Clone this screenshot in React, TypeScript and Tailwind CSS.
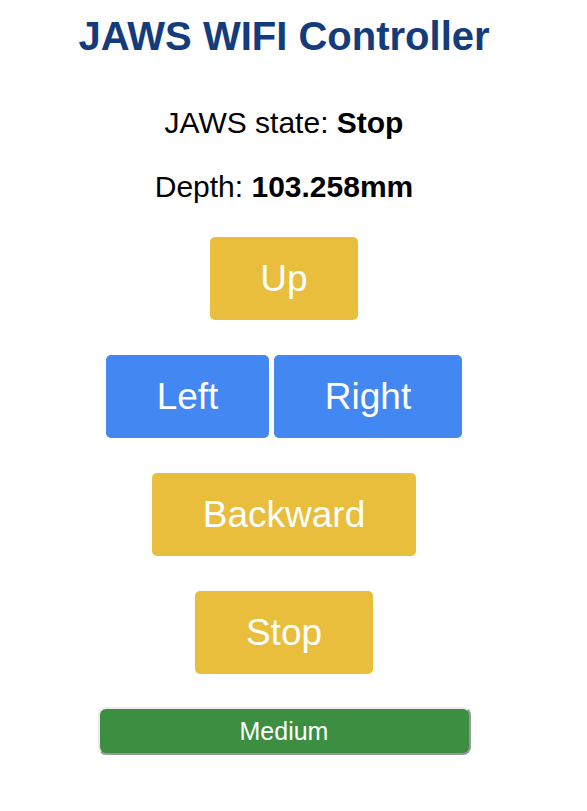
import React from 'react';

const btnBase =
  "h-[83px] rounded-[5px] text-white text-[37px] leading-none font-['Liberation_Sans',Arial,sans-serif]";

function App() {
  return (
    <div className="min-h-screen bg-white font-['Liberation_Sans',Arial,sans-serif]">
      <div className="w-[568px] flex flex-col items-center text-center">
        {/* Title */}
        <h1 className="pt-[13px] text-[40px] leading-[46px] font-bold text-[#143b7c]">
          JAWS WIFI Controller
        </h1>

        {/* Status */}
        <p className="mt-[47px] text-[30px] leading-[34px] text-black">
          JAWS state: <b>Stop</b>
        </p>
        <p className="mt-[30px] text-[30px] leading-[34px] text-black">
          Depth: <b>103.258mm</b>
        </p>

        {/* Controls */}
        <button className={`${btnBase} mt-[33px] w-[148px] bg-[#e8be3c]`}>Up</button>

        <div className="mt-[35px] flex gap-[5px]">
          <button className={`${btnBase} w-[163px] bg-[#4387f3]`}>Left</button>
          <button className={`${btnBase} w-[188px] bg-[#4387f3]`}>Right</button>
        </div>

        <button className={`${btnBase} mt-[35px] w-[264px] bg-[#e8be3c]`}>Backward</button>

        <button className={`${btnBase} mt-[35px] w-[178px] bg-[#e8be3c]`}>Stop</button>

        <button className="mt-[33px] w-[373px] h-[48px] rounded-[8px] border-2 border-t-[#ebebeb] border-l-[#ebebeb] border-b-[#999999] border-r-[#999999] bg-[#3c8e40] text-white text-[25px] leading-none">
          Medium
        </button>
      </div>
    </div>
  );
}

export default App;
